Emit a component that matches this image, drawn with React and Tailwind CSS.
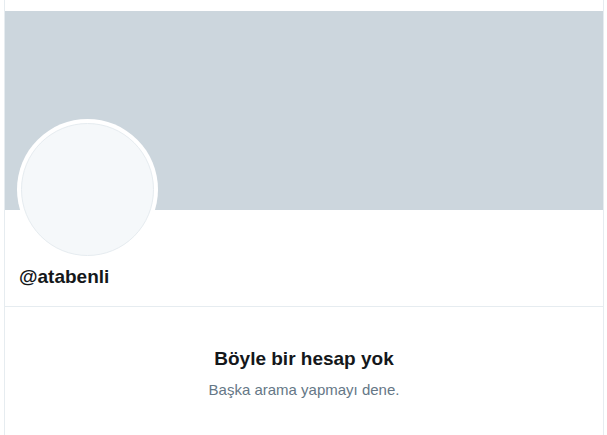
import React from "react";

const App = () => {
  return (
    <div className="min-h-[435px] w-[607px] bg-white font-['Liberation_Sans',Arial,sans-serif]">
      <div className="ml-[4px] w-[600px] min-h-[435px] border-x border-[#e6ecf0]">
        <div className="h-[11px]" />
        <div className="h-[199px] bg-[#ccd6dd]" />

        <div className="px-[12px]">
          <div className="-mt-[91px] h-[141px] w-[141px] rounded-full bg-white p-[4px]">
            <div className="h-full w-full rounded-full border border-[#e6ecf0] bg-[#f5f8fa]" />
          </div>
          <div className="mt-[4px] ml-[2px] pb-[17px] text-[19px] font-bold leading-[25px] text-[#14171a]">
            @atabenli
          </div>
        </div>

        <div className="border-t border-[#e6ecf0]" />

        <div className="flex flex-col items-center pt-[39px] text-center">
          <h2 className="text-[19px] font-bold leading-[25px] text-[#14171a]">
            Böyle bir hesap yok
          </h2>
          <p className="mt-[9px] text-[15px] leading-[20px] text-[#657786]">
            Başka arama yapmayı dene.
          </p>
        </div>
      </div>
    </div>
  );
};

export default App;
